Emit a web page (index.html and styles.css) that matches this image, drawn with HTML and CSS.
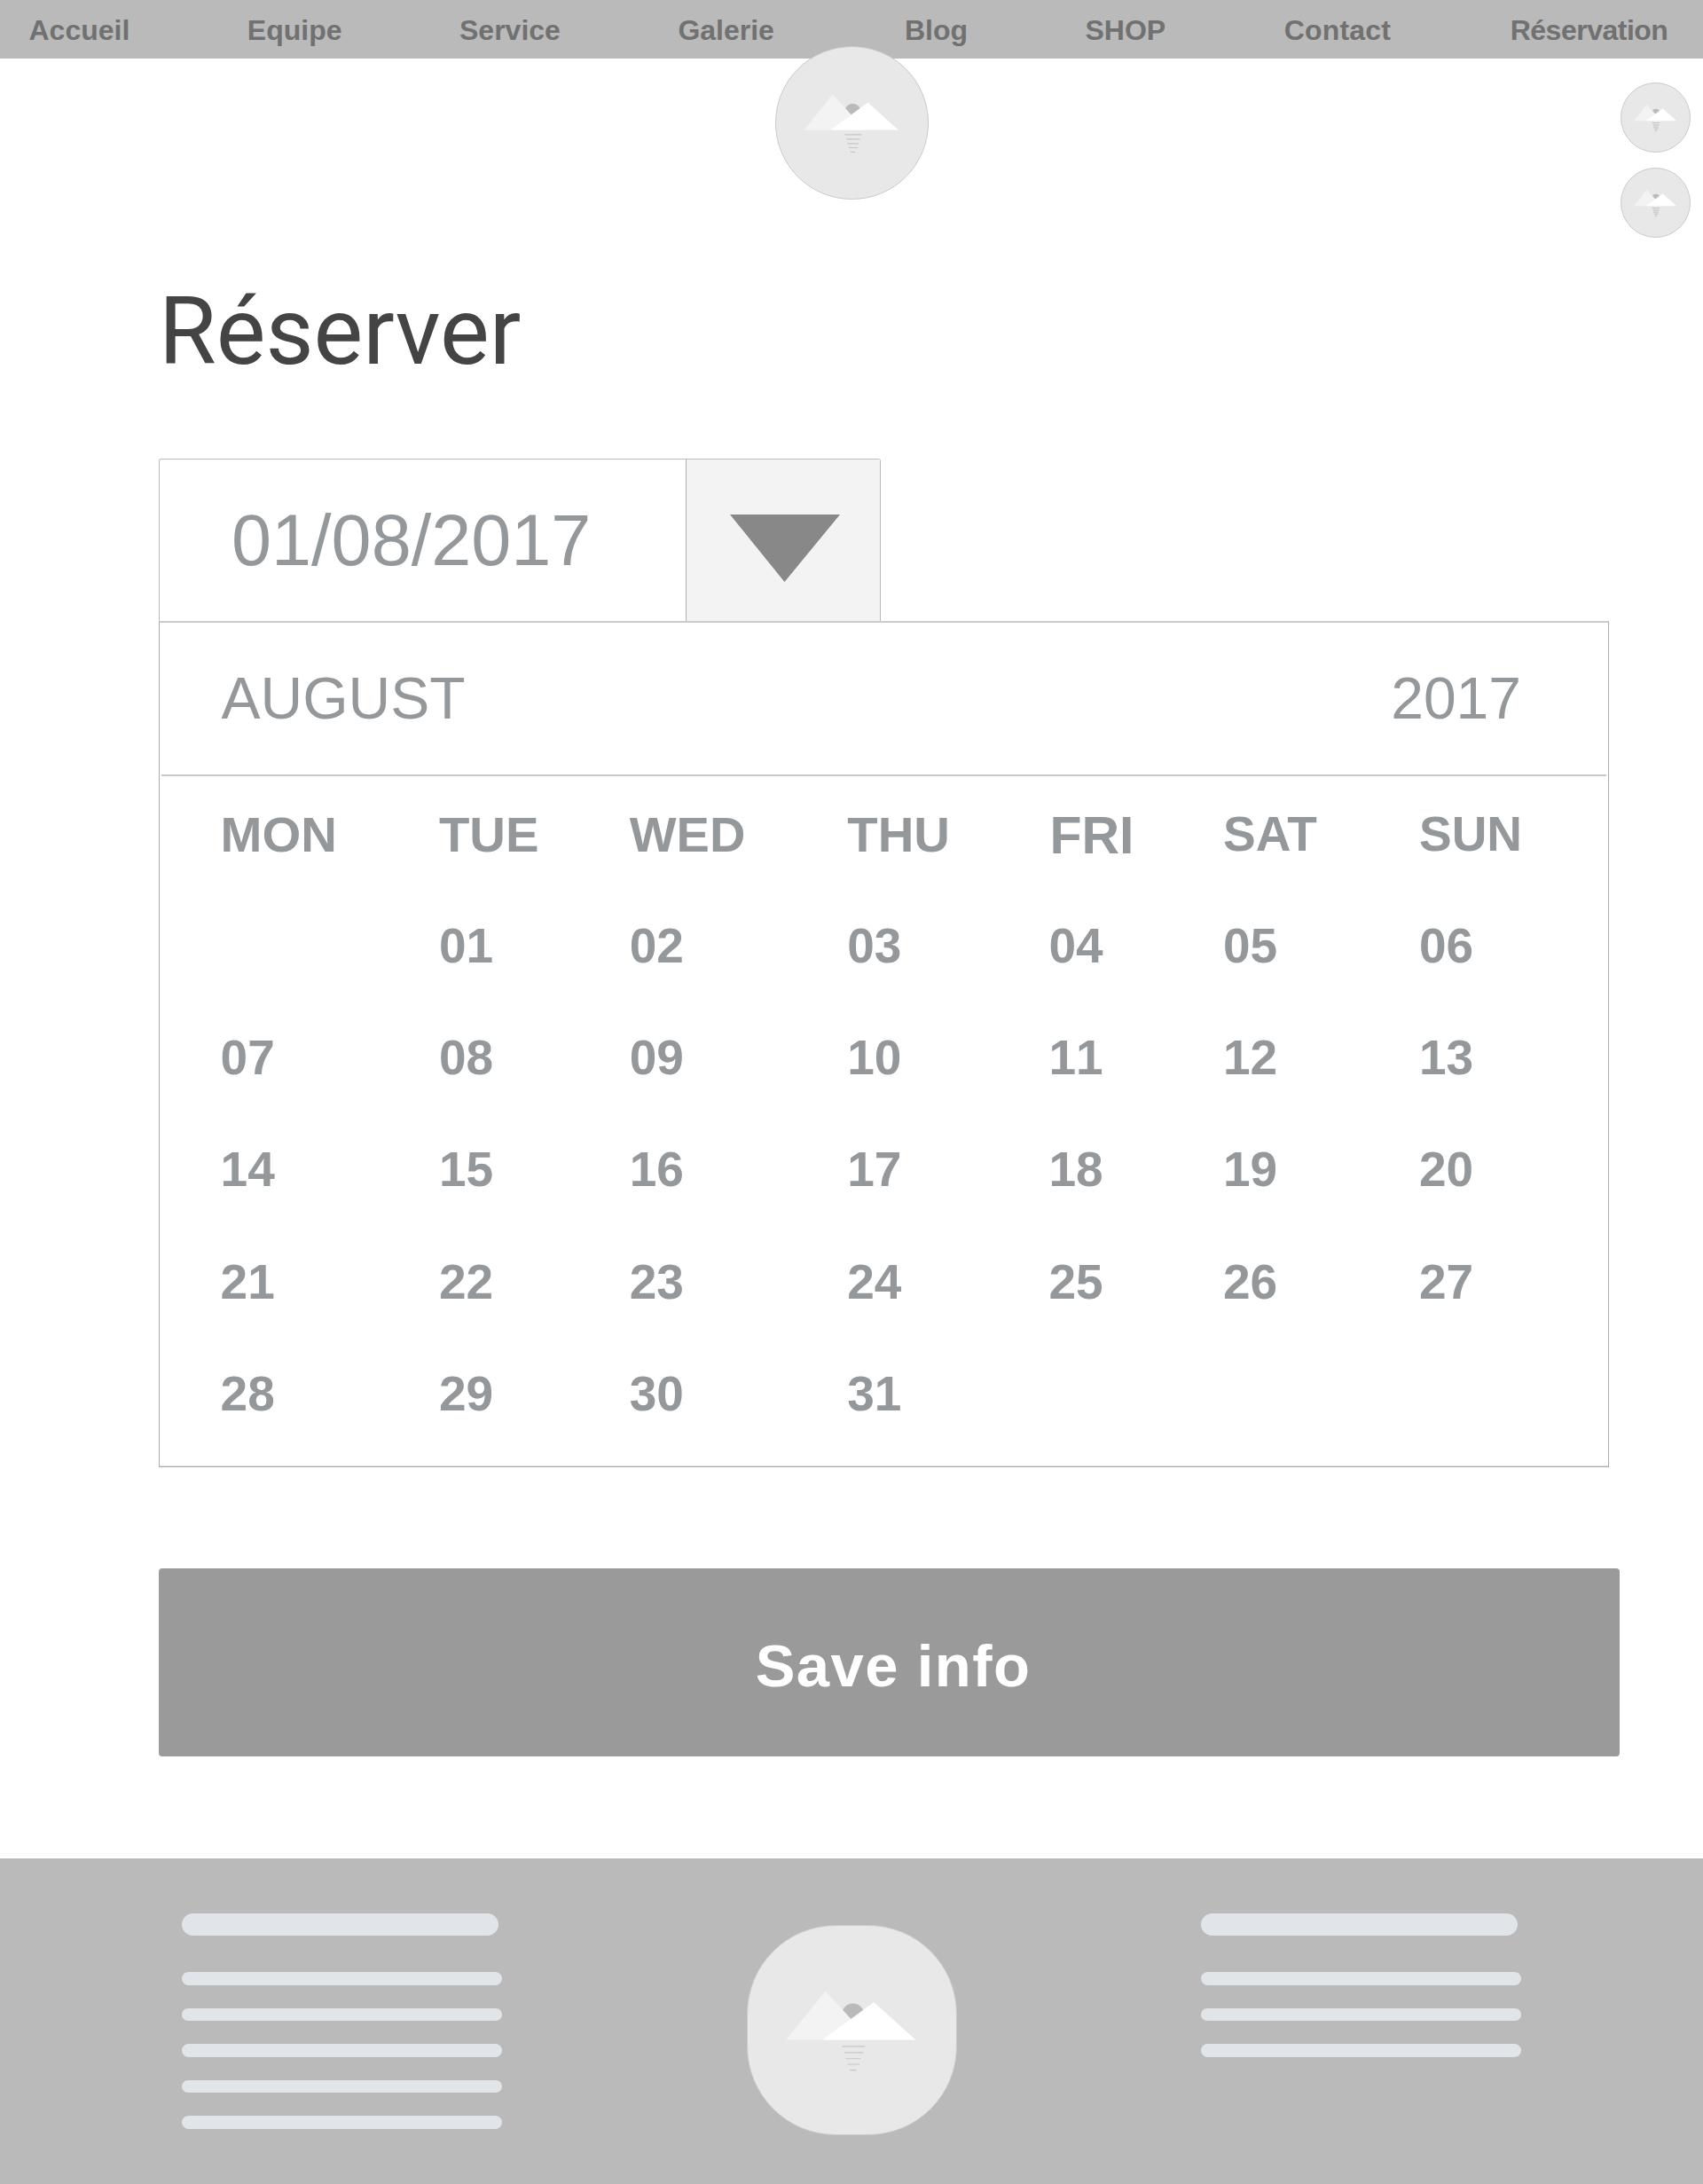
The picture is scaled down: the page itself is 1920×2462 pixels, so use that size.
FILE: index.html
```html
<!DOCTYPE html>
<html lang="fr">
<head>
<meta charset="utf-8">
<title>Réserver</title>
<link rel="stylesheet" href="styles.css">
</head>
<body>
<svg class="defs" width="0" height="0" aria-hidden="true">
  <symbol id="landscape" viewBox="0 0 711 711">
    <circle cx="359" cy="303" r="38" fill="#b8bbba"/>
    <path d="M131 389L265 222L418 389Z" fill="#f3f3f3"/>
    <path d="M255 389L430 260L573 389Z" fill="#fff"/>
    <path class="ripple" d="M322 411H400M329 432H394M334 453H386M341 472H382M349 492H370"/>
  </symbol>
</svg>

<header class="header">
  <nav class="nav">
    <a>Accueil</a>
    <a>Equipe</a>
    <a>Service</a>
    <a>Galerie</a>
    <a class="after-logo">Blog</a>
    <a>SHOP</a>
    <a class="contact">Contact</a>
    <a class="booking">Réservation</a>
  </nav>
  <div class="logo logo-main"><svg><use href="#landscape"/></svg></div>
  <div class="side-links">
    <div class="logo logo-small"><svg><use href="#landscape"/></svg></div>
    <div class="logo logo-small"><svg><use href="#landscape"/></svg></div>
  </div>
</header>

<main class="main">
  <h1 class="title">Réserver</h1>

  <div class="picker">
    <div class="picker-value">01/08/2017</div>
    <div class="picker-toggle">
      <svg width="124" height="77" viewBox="0 0 124 77"><path d="M0 0H124L61.500 76Z" fill="#888"/></svg>
    </div>
  </div>

  <section class="calendar">
    <div class="calendar-head"><span>AUGUST</span><span class="year">2017</span></div>
    <div class="days">
      <b class="name">MON</b><b class="name">TUE</b><b class="name wed">WED</b><b class="name">THU</b><b class="name fri">FRI</b><b class="name weekend">SAT</b><b class="name weekend">SUN</b>
      <b></b><b>01</b><b>02</b><b>03</b><b>04</b><b>05</b><b>06</b>
      <b>07</b><b>08</b><b>09</b><b>10</b><b>11</b><b>12</b><b>13</b>
      <b>14</b><b>15</b><b>16</b><b>17</b><b>18</b><b>19</b><b>20</b>
      <b>21</b><b>22</b><b>23</b><b>24</b><b>25</b><b>26</b><b>27</b>
      <b>28</b><b>29</b><b>30</b><b>31</b>
    </div>
  </section>

  <button class="save">Save info</button>
</main>

<footer class="footer">
  <div class="lines">
    <i class="line-title"></i><i></i><i></i><i></i><i></i><i></i>
  </div>
  <div class="logo logo-footer"><svg><use href="#landscape"/></svg></div>
  <div class="lines">
    <i class="line-title"></i><i></i><i></i><i></i>
  </div>
</footer>
</body>
</html>
```
FILE: styles.css
```css
* {
  box-sizing: border-box;
}

body {
  margin: 0;
  background: #fff;
  font-family: "Liberation Sans", Arial, sans-serif;
  color: #94989b;
}

.defs {
  position: absolute;
}

.ripple {
  fill: none;
  stroke: #c3c5c4;
  stroke-width: 1.2px;
  vector-effect: non-scaling-stroke;
}

/* Header */
.header {
  position: relative;
  height: 66px;
  background: #bababa;
}

.nav {
  display: flex;
  gap: 132.5px;
  padding: 18px 0 0 32.5px;
  font-size: 32px;
  font-weight: 700;
  line-height: 1;
  color: #717171;
  white-space: nowrap;
}

.nav .after-logo {
  margin-left: 14.5px;
}

.nav .contact {
  margin-left: 1px;
  letter-spacing: 0.2px;
}

.nav .booking {
  margin-left: 2px;
  letter-spacing: -0.5px;
}

.logo {
  background: #e8e8e8;
  border: 1px solid #cacaca;
  border-radius: 50%;
}

.logo svg {
  display: block;
  width: 100%;
  height: 100%;
}

.logo-main {
  position: absolute;
  left: 873.5px;
  top: 52px;
  width: 173px;
  height: 173px;
}

.side-links {
  position: absolute;
  right: 14px;
  top: 93px;
  display: flex;
  flex-direction: column;
  gap: 17px;
}

.logo-small {
  width: 79px;
  height: 79px;
}

/* Booking form */
.main {
  padding: 256px 0 0 179px;
}

.title {
  margin: 0;
  font-family: Roboto, sans-serif;
  font-size: 105px;
  font-weight: 400;
  line-height: 1;
  color: #444;
}

.picker {
  display: flex;
  width: 814px;
  height: 183px;
  margin-top: 90px;
  border: solid #bcbcbc;
  border-width: 1px 1px 0;
  border-radius: 3px 3px 0 0;
}

.picker-value {
  width: 593px;
  padding: 51px 0 0 81px;
  font-size: 81px;
  line-height: 1;
}

.picker-toggle {
  flex: 1;
  padding: 62px 0 0 49px;
  background: #f3f3f3;
  border-left: 1px solid #b0b0b0;
}

.calendar {
  width: 1635px;
  height: 954px;
  border: 1px solid #acacac;
  border-top: 2px solid #cbcbcb;
  box-shadow: inset 0 -1px #e2e2e2;
}

.calendar-head {
  display: flex;
  justify-content: space-between;
  height: 173px;
  margin: 0 2px;
  padding: 52px 96px 0 67.5px;
  border-bottom: 2px solid #c8c8c8;
  font-size: 66px;
  line-height: 1;
}

.days {
  display: grid;
  grid-template-columns: 246.4px 214.7px 245.6px 227.2px 196.5px 221px 1fr;
  grid-template-rows: 127.8px;
  grid-auto-rows: 126.25px;
  padding-left: 68.6px;
  font-size: 55px;
  font-kerning: none;
  line-height: 126.25px;
}

.days .name {
  font-size: 56.3px;
  font-kerning: normal;
  line-height: 132px;
}

.days .wed {
  font-size: 56px;
  line-height: 131px;
}

.days .fri {
  padding-left: 1px;
  font-size: 59px;
  line-height: 134px;
}

.days .weekend {
  font-size: 55px;
  line-height: 131px;
}

.save {
  display: block;
  width: 1647px;
  height: 212px;
  margin-top: 114px;
  padding: 7px 0 0 9px;
  background: #9a9a9a;
  border: 0;
  border-radius: 4px;
  font: 700 67px/205px "Liberation Sans", Arial, sans-serif;
  letter-spacing: 1.4px;
  color: #fff;
}

/* Footer */
.footer {
  display: flex;
  justify-content: space-between;
  height: 367px;
  margin-top: 115px;
  padding: 61.500px 205px 0;
  background: #bababa;
}

.lines {
  display: flex;
  flex-direction: column;
  gap: 26.2px;
  width: 361px;
}

.lines i {
  height: 14.3px;
  border-radius: 8px;
  background: #e1e5ea;
}

.lines .line-title {
  width: 357px;
  height: 25.3px;
  margin-bottom: 15.5px;
  border-radius: 13px;
}

.logo-footer {
  width: 237px;
  height: 237px;
  margin-top: 13px;
  border-radius: 100px;
}
```
